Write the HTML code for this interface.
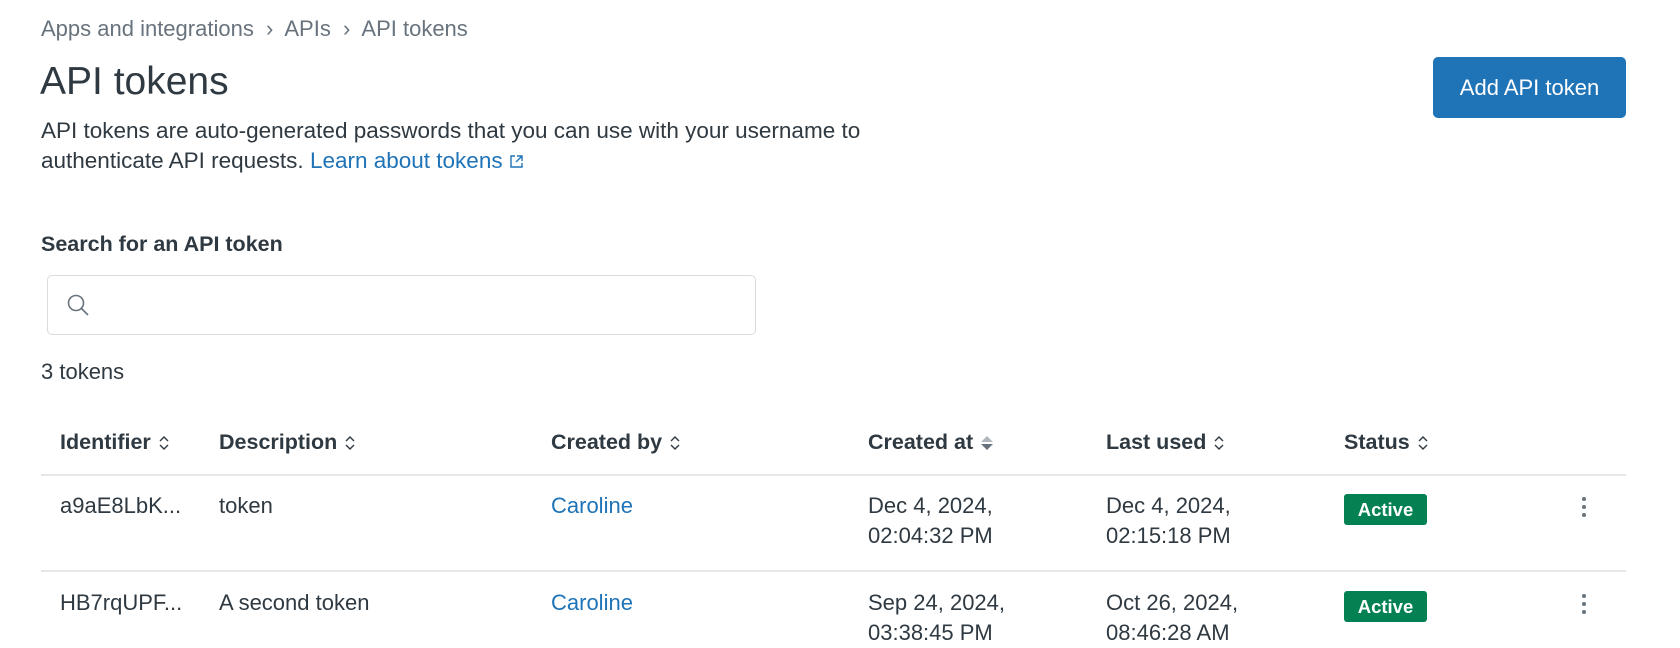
<!DOCTYPE html>
<html><head><meta charset="utf-8"><style>
*{box-sizing:border-box;margin:0;padding:0}
body{width:1680px;height:645px;overflow:hidden;background:#fff;font-family:"Liberation Sans",Arial,sans-serif;color:#2f3941;position:relative}
.a{position:absolute;white-space:nowrap}
.bc{left:41px;top:16px;font-size:22px;color:#68737d}
h1{position:absolute;left:40px;top:60px;font-size:39px;font-weight:400;color:#2f3941}
.desc{left:41px;top:116px;font-size:22.5px;line-height:30px;color:#2f3941}
.desc a{color:#1f73b7;text-decoration:none}
.btn{position:absolute;left:1433px;top:57px;width:193px;height:61px;background:#1f73b7;border-radius:5px;color:#fff;font-size:22px;display:flex;align-items:center;justify-content:center}
.lbl{left:41px;top:232px;font-size:21.5px;font-weight:700}
.search{position:absolute;left:47px;top:275px;width:709px;height:60px;border:1px solid #d8dcde;border-radius:5px}
.cnt{left:41px;top:359px;font-size:22px}
.th{top:430px;font-size:21.5px;font-weight:700}
.td{font-size:22px;line-height:30px}
.line{position:absolute;left:41px;width:1585px;height:2px;background:#e5e8ea}
.lnk{color:#1f73b7}
.badge{position:absolute;left:1344px;width:83px;height:31px;background:#038153;color:#fff;font-weight:700;font-size:18.5px;border-radius:3px;display:flex;align-items:center;justify-content:center}
.dots{position:absolute;left:1582px;width:4px}
.dots i{display:block;width:4px;height:4px;border-radius:2px;background:#68737d;margin-bottom:4px}
.s{display:inline-block;vertical-align:middle;margin-left:7px}
</style></head><body>
<div class="a bc">Apps and integrations &nbsp;›&nbsp; APIs &nbsp;›&nbsp; API tokens</div>
<h1>API tokens</h1>
<div class="a desc">API tokens are auto-generated passwords that you can use with your username to<br>authenticate API requests. <a>Learn about tokens <svg width="15" height="15" viewBox="0 0 15 15" style="vertical-align:-1px"><path d="M6 2H2v11h11V9M8 2h5v5M13 2L7 8" fill="none" stroke="#1f73b7" stroke-width="1.4"/></svg></a></div>
<div class="btn">Add API token</div>
<div class="a lbl">Search for an API token</div>
<div class="search"><svg style="position:absolute;left:18px;top:17px" width="26" height="26" viewBox="0 0 26 26"><circle cx="10" cy="10" r="7.5" fill="none" stroke="#68737d" stroke-width="1.6"/><path d="M15.5 15.5L22 22" stroke="#68737d" stroke-width="1.6"/></svg></div>
<div class="a cnt">3 tokens</div>

<div class="a th" style="left:60px">Identifier<svg class="s" width="12" height="18" viewBox="0 0 12 18"><path d="M2 7l4-4 4 4M2 11l4 4 4-4" fill="none" stroke="#2f3941" stroke-width="1.4"/></svg></div>
<div class="a th" style="left:219px">Description<svg class="s" width="12" height="18" viewBox="0 0 12 18"><path d="M2 7l4-4 4 4M2 11l4 4 4-4" fill="none" stroke="#2f3941" stroke-width="1.4"/></svg></div>
<div class="a th" style="left:551px">Created by<svg class="s" width="12" height="18" viewBox="0 0 12 18"><path d="M2 7l4-4 4 4M2 11l4 4 4-4" fill="none" stroke="#2f3941" stroke-width="1.4"/></svg></div>
<div class="a th" style="left:868px">Created at<svg class="s" width="14" height="18" viewBox="0 0 14 18"><path d="M1 8l6-6 6 6z" fill="#b0b7bc"/><path d="M1 10l6 6 6-6z" fill="#68737d"/></svg></div>
<div class="a th" style="left:1106px">Last used<svg class="s" width="12" height="18" viewBox="0 0 12 18"><path d="M2 7l4-4 4 4M2 11l4 4 4-4" fill="none" stroke="#2f3941" stroke-width="1.4"/></svg></div>
<div class="a th" style="left:1344px">Status<svg class="s" width="12" height="18" viewBox="0 0 12 18"><path d="M2 7l4-4 4 4M2 11l4 4 4-4" fill="none" stroke="#2f3941" stroke-width="1.4"/></svg></div>
<div class="line" style="top:474px"></div>

<div class="a td" style="left:60px;top:491px">a9aE8LbK...</div>
<div class="a td" style="left:219px;top:491px">token</div>
<div class="a td lnk" style="left:551px;top:491px">Caroline</div>
<div class="a td" style="left:868px;top:491px">Dec 4, 2024,<br>02:04:32 PM</div>
<div class="a td" style="left:1106px;top:491px">Dec 4, 2024,<br>02:15:18 PM</div>
<div class="badge" style="top:494px">Active</div>
<div class="dots" style="top:497px"><i></i><i></i><i></i></div>
<div class="line" style="top:570px"></div>

<div class="a td" style="left:60px;top:588px">HB7rqUPF...</div>
<div class="a td" style="left:219px;top:588px">A second token</div>
<div class="a td lnk" style="left:551px;top:588px">Caroline</div>
<div class="a td" style="left:868px;top:588px">Sep 24, 2024,<br>03:38:45 PM</div>
<div class="a td" style="left:1106px;top:588px">Oct 26, 2024,<br>08:46:28 AM</div>
<div class="badge" style="top:591px">Active</div>
<div class="dots" style="top:594px"><i></i><i></i><i></i></div>
</body></html>
